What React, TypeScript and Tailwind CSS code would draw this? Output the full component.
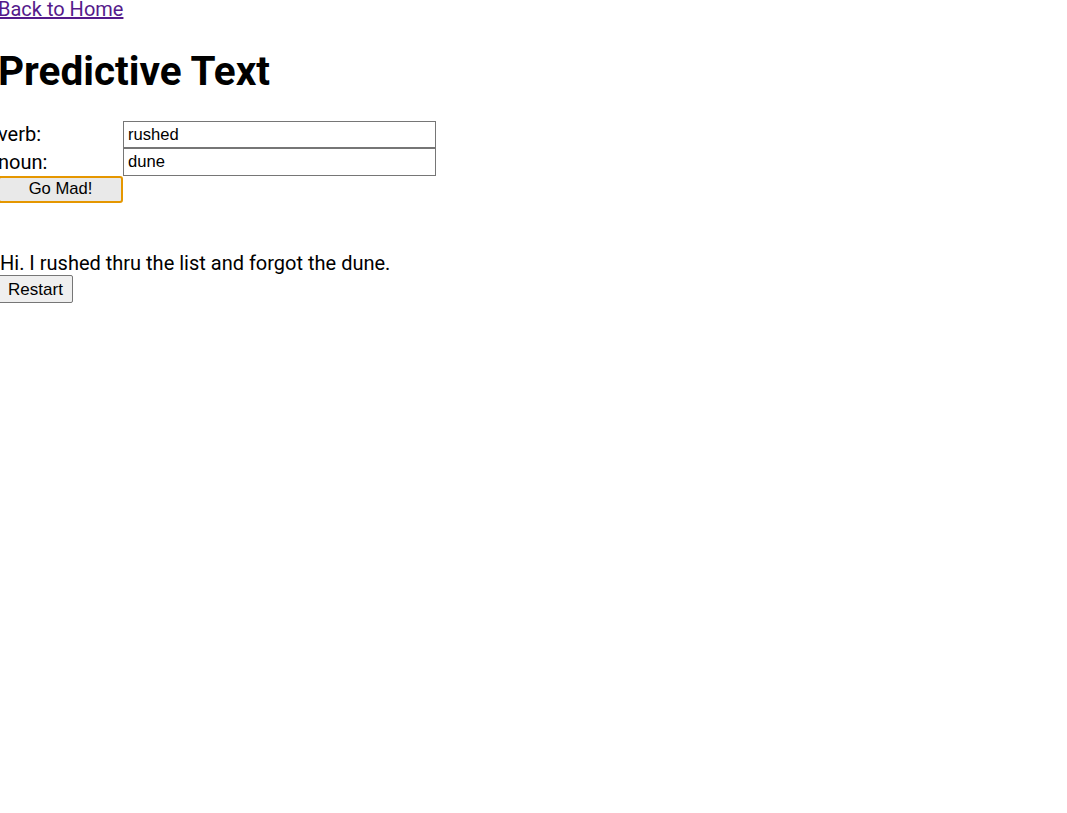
import { useState } from "react";

export default function App() {
  const [verb, setVerb] = useState("rushed");
  const [noun, setNoun] = useState("dune");

  return (
    <div className="min-h-screen overflow-hidden bg-white">
      <div className="-mt-[2px] -ml-[2px] text-black font-['Roboto',sans-serif] text-[20px] leading-[23px]">
        <a href="#" className="text-[#551a8b] underline">
          Back to Home
        </a>
        <h1 className="mt-[27px] mb-[26px] text-[40.5px] leading-[47px] font-bold">Predictive Text</h1>

        <div className="grid grid-cols-[125px_313px] items-center">
          <label>verb:</label>
          <input
            value={verb}
            onChange={(e) => setVerb(e.target.value)}
            className="h-[27px] border border-[#767676] px-[4px] font-['Liberation_Sans',sans-serif] text-[16.6px] outline-none"
          />
          <label>noun:</label>
          <input
            value={noun}
            onChange={(e) => setNoun(e.target.value)}
            className="h-[28px] border border-[#767676] px-[4px] font-['Liberation_Sans',sans-serif] text-[16.6px] outline-none"
          />
          <button className="h-[27px] rounded-[3px] border-2 border-[#e59700] bg-[#e9e9e9] font-['Liberation_Sans',sans-serif] text-[16.6px] leading-none">
            Go Mad!
          </button>
        </div>

        <p className="mt-[49px] ml-[2px]">Hi. I rushed thru the list and forgot the dune.</p>
        <button className="h-[28px] w-[75px] rounded-[2px] border border-[#767676] bg-[#efefef] font-['Liberation_Sans',sans-serif] text-[17px] leading-none">
          Restart
        </button>
      </div>
    </div>
  );
}
